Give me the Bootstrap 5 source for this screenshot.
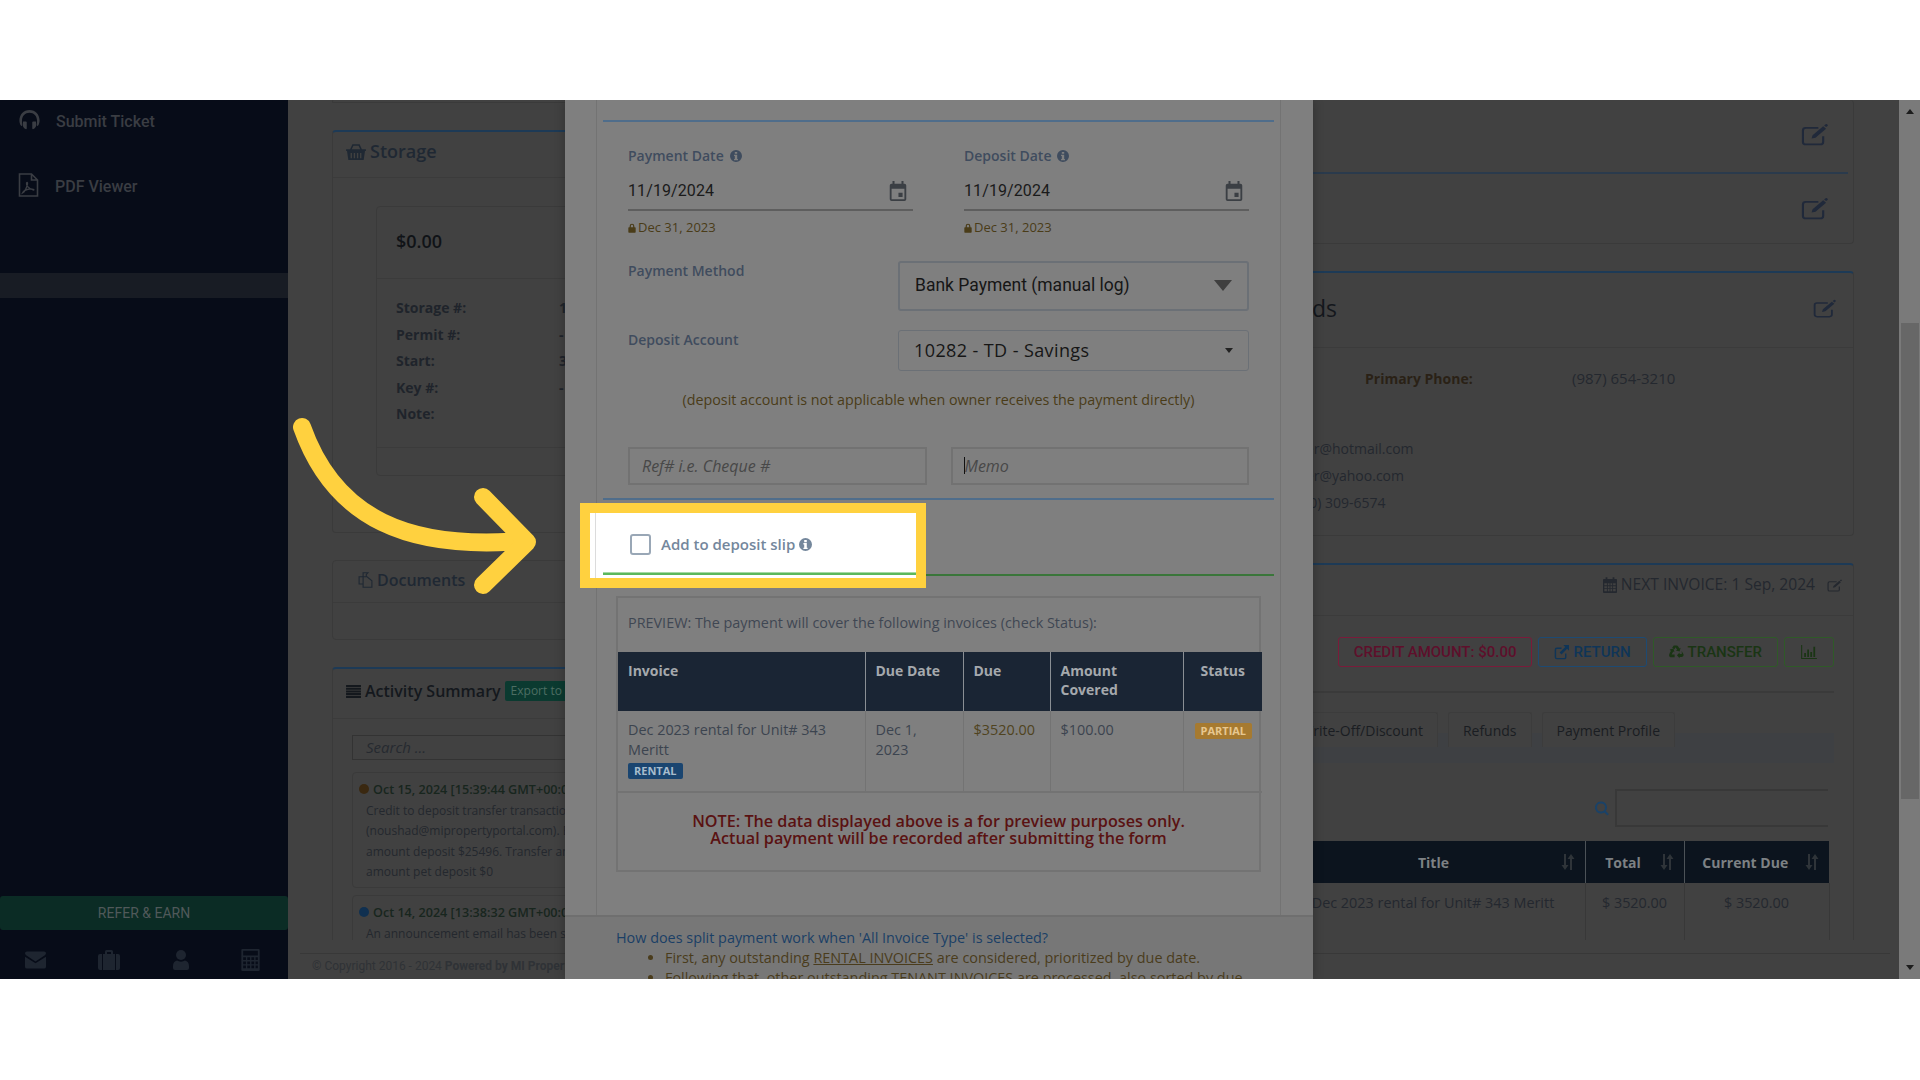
<!DOCTYPE html>
<html lang="en">
<head>
  <meta charset="UTF-8">
  <title>Receive Payment</title>
  <link href="https://cdn.jsdelivr.net/npm/bootstrap@5.3.3/dist/css/bootstrap.min.css" rel="stylesheet">
  <style>
    body { margin: 0; height: 1080px; overflow: hidden; background: #fff; font-family: "Open Sans", sans-serif; font-size: 13px; color: #333; }
    svg.ico { fill: currentColor; display: inline-block; flex: none; }
    .shot { position: relative; width: 1920px; height: 1080px; padding: 100px 0 101px; }
    .app { position: relative; height: 879px; background: #414141; overflow: hidden; }

    .side { width: 288px; flex: none; background: #070c18; color: #3a3d43; font-family: Roboto, sans-serif; }
    .side-link { height: 44px; padding-left: 18px; font-size: 16px; font-weight: 500; }
    .side-link svg { margin: -4px 15px 0 0; }
    .side-link + .side-link { margin-top: 21px; }
    .side-link + .side-link svg { margin-right: 16px; }
    .side-band { height: 25px; margin-top: 64px; background: #181c24; }
    .refer { height: 34px; background: #0b2c25; color: #50595a; border-radius: 3px; font-size: 14px; }
    .side-tools { height: 49px; padding: 11px 28px 0 25px; color: #1e2530; }

    .main-area { flex: 1; min-width: 0; }
    .page-cols { height: 840px; overflow: hidden; padding: 0 45px 0 44px; display: grid; grid-template-columns: 540px 1fr; gap: 24px; }
    .stack { display: flex; flex-direction: column; gap: 27px; }
    .panel { background: #414141; border: 1px solid #3a3a3a; border-radius: 4px; color: #2b2f36; flex: none; }
    .panel-blue { border-top: 2px solid #1d3a56; }
    .panel-head { background: transparent; border-bottom: 1px solid #3b3b3b; padding: 0 13px 3px; font-size: 18px; font-weight: 600; color: #1f2833; }
    .stub { height: 3px; border-top: 0; }
    .storage { height: 403px; }
    .storage .panel-head { height: 46px; padding-bottom: 6px; }
    .store-inner { margin: 28px 0 0 43px; height: 270px; border: 1px solid #3a3a3a; border-radius: 4px; }
    .store-amount { height: 72px; padding: 0 0 2px 19px; border-bottom: 1px solid #3b3b3b; font-size: 18px; font-weight: 600; color: #101317; }
    .store-rows { height: 169px; padding: 16px 0 0 19px; border-bottom: 1px solid #3b3b3b; font-weight: 700; font-size: 14px; color: #1f242b; line-height: 26.500px; }
    .store-rows span { display: inline-block; width: 163px; }
    .docs { height: 80px; }
    .docs .panel-head { height: 42px; padding-left: 25px; font-size: 16px; }
    .activity { height: 400px; }
    .activity .panel-head { height: 50px; padding-bottom: 5px; font-size: 16px; color: #14181d; }
    .btn-export { background: #0b3a30; color: #4d6e63; font-size: 12px; font-weight: 400; border-radius: 2px; padding: 1px 6px; white-space: nowrap; }
    .act-search { margin: 16px 0 12px 19px; height: 25px; border: 1px solid #333; padding-left: 13px; font-style: italic; font-size: 15px; color: #262a30; line-height: 22px; }
    .act-item { margin: 0 0 7px 19px; padding: 7px 6px 0; border: 1px solid #3a3a3a; border-radius: 4px; font-size: 12px; line-height: 20.500px; color: #24282e; height: 116px; white-space: nowrap; overflow: hidden; }
    .act-when { color: #18261e; font-size: 12.600px; font-weight: 600; }
    .dot { display: inline-block; width: 10px; height: 10px; border-radius: 50%; margin-right: 4px; }
    .act-body { padding-left: 7px; }

    .top-card { height: 144px; border-top: 0; }
    .top-row { height: 72px; padding: 0 25px 3px 0; }
    .top-row + .top-row { border-top: 2px solid #2a3a4c; margin-right: 5px; padding: 0 20px 0 0; height: 70px; }
    .ico-edit { color: #20293a; }
    .contact { height: 265px; }
    .contact .panel-head { height: 75px; font-size: 23px; font-weight: 400; color: #14171c; padding-right: 17px; }
    .contact-title { padding-left: 252px; margin-right: auto; }
    .contact-grid { display: grid; grid-template-columns: 468px 207px 1fr; padding-top: 17px; font-size: 14px; line-height: 27px; color: #24282f; }
    .contact-lbl { font-weight: 700; color: #2a2116; }
    .contact-val { font-size: 15px; }
    .contact-list { padding: 43px 0 0 381px; font-size: 14px; line-height: 27px; color: #24282f; }
    .phone-line { padding-left: 11px; }
    .billing { height: 400px; }
    .billing .panel-head { height: 51px; padding: 0 11px 10px 0; font-size: 15.600px; font-weight: 400; color: #24282f; }
    .billing-body { padding: 21px 19px 0 0; }
    .tool-btn { height: 30px; padding: 0 15px; font-family: Roboto, sans-serif; font-size: 15px; font-weight: 500; border: 1px solid; border-radius: 3px; gap: 4px; background: transparent; white-space: nowrap; }
    .tool-red { color: #5e0f2b; border-color: #7a1b3a; }
    .tool-blue { color: #0f3558; border-color: #1d4a73; }
    .tool-green { color: #1a3514; border-color: #2f5a28; }
    .bill-rule { margin-top: 24px; border-top: 2px solid #3a3a3a; }
    .bill-tabs { height: 51px; margin-top: 19px; padding-right: 159px; gap: 10px; background: linear-gradient(transparent 21px, #3e4043 21px); }
    .bill-tab { height: 35px; padding: 0 14px; border: 1px solid #3c3c3c; border-bottom: 0; border-radius: 3px 3px 0 0; background: #414141; color: #1a1d22; font-size: 14px; font-weight: 500; }
    .bill-search { margin-top: 26px; margin-right: 6px; gap: 6px; color: #1a4268; }
    .bill-search div { width: 213px; height: 38px; border: 2px solid #383838; border-right: 0; }
    .bill-table { table-layout: fixed; width: 909px; margin: 14px 0 0 23px; border-collapse: collapse; }
    .bill-table th { height: 42px; background: #0c141e; color: #7d8184; font-size: 14px; font-weight: 700; text-align: center; border-right: 1px solid #4c5257; position: relative; padding-right: 24px; }
    .bill-table th:nth-child(2) { padding-right: 0; }
    .bill-table th:last-child { border-right: 0; }
    .bill-table td { height: 58px; padding-top: 9px; vertical-align: top; text-align: center; font-size: 14.400px; color: #24282f; border-right: 1px solid #383838; }
    .sort-mark { position: absolute; right: 10px; top: 13px; color: #2f3439; }

    .page-foot { margin: 13px 9px 0 12px; border-top: 1px solid #383838; padding: 3px 0 0 12px; font-family: Roboto, sans-serif; font-size: 12px; color: #2f3236; }
    .page-scroll { width: 21px; flex: none; background: #7a7a7a; padding: 0 1px 0 2px; }
    .scroll-thumb { height: 476px; margin-top: 223px; background: #676767; }
    .scroll-up, .scroll-down { position: absolute; right: 6px; width: 0; height: 0; border-left: 4.500px solid transparent; border-right: 4.500px solid transparent; }
    .scroll-up { top: 109px; border-bottom: 5px solid #1d1d1d; }
    .scroll-down { top: 965px; border-top: 5px solid #1d1d1d; }

    .pay-modal { position: absolute; left: 565px; top: 0; width: 748px; height: 879px; background: #7f7f7f; overflow: hidden; padding: 0 32px 0 31px; box-shadow: 0 0 10px rgba(0,0,0,.25); }
    .pay-panel { height: 815px; border-left: 1px solid #737373; border-right: 1px solid #737373; padding: 0 6px; }
    .pay-line { border-bottom: 2px solid #4f6d8b; }
    .pay-green { border-bottom: 2px solid #3a763a; height: 76px; }
    .pay-dates { height: 378px; padding: 0 25px; }
    .pay-lbl { font-size: 14px; font-weight: 600; color: #3f4c5e; line-height: 20px; }
    .date-col { width: 285px; }
    .date-field { height: 45px; border-bottom: 2px solid #5e5e5e; padding: 13px 0 0; font-family: Roboto, sans-serif; font-size: 16px; letter-spacing: .1px; color: #1a1a1a; }
    .locked { padding-top: 7px; font-size: 13px; color: #4a3c18; gap: 2px; }
    .pick { height: 41px; border: 1px solid #6b7076; border-radius: 3px; padding: 0 15px; color: #161616; }
    .pick-lg { width: 351px; height: 50px; border-width: 2px; font-family: Roboto, sans-serif; font-size: 17.500px; }
    .pick-sm { width: 351px; font-size: 18px; letter-spacing: .4px; }
    .caret-lg { width: 0; height: 0; border-left: 9px solid transparent; border-right: 9px solid transparent; border-top: 11px solid #3f3f3f; }
    .caret-sm { width: 0; height: 0; border-left: 4.500px solid transparent; border-right: 4.500px solid transparent; border-top: 5px solid #222; }
    .dep-note { margin: 20px 0 38px; text-align: center; font-size: 14.300px; color: #4a3c18; line-height: 18px; white-space: nowrap; }
    .ref-input { height: 38px; flex: 1; position: relative; }
    .ref-input input { height: 38px; width: 100%; background: transparent; border: 2px solid #727272; border-radius: 0; padding: 0 12px; font-style: italic; font-size: 16px; }
    .ref-input input::placeholder { color: #484848; opacity: 1; }
    .memo-caret { position: absolute; left: 13px; top: 10px; width: 1px; height: 17px; background: #111; }

    .preview { margin: 20px 13px 0; height: 276px; border: 2px solid #737373; }
    .preview-title { height: 54px; padding: 16px 0 0 10px; font-size: 14.400px; color: #3f4753; line-height: 18px; white-space: nowrap; }
    .inv-table { width: 100%; table-layout: fixed; border-collapse: collapse; }
    .inv-table th { height: 59px; background: #1a2534; color: #a5a9ad; padding: 9px 10px; font-size: 14px; font-weight: 700; line-height: 19px; vertical-align: top; border-right: 1px solid #8a8f94; }
    .inv-table td { height: 81px; padding: 9px 10px 0; vertical-align: top; font-size: 14.400px; line-height: 20px; color: #3c444f; border-right: 1px solid #737373; border-bottom: 2px solid #737373; }
    .inv-table th:last-child, .inv-table td:last-child { border-right: 0; }
    .tag-rental, .tag-partial { display: inline-block; font-size: 11px; font-weight: 700; line-height: 16px; padding: 0 6px; border-radius: 2px; }
    .tag-rental { background: #1a4570; color: #a7bccd; }
    .tag-partial { background: #a67a30; color: #e6c78f; margin: 3px 0 0 1px; }
    .inv-table .amt-due { color: #4f4320; padding-right: 0; }
    .inv-note { padding-top: 20px; text-align: center; font-size: 16.200px; font-weight: 600; line-height: 17px; color: #5a1212; white-space: nowrap; }

    .pay-foot { height: 64px; background: #777; border-top: 2px solid #6f6f6f; margin: 0 -32px 0 -31px; padding: 11px 0 0 51px; font-size: 14.400px; line-height: 20px; white-space: nowrap; overflow: hidden; }
    .pay-foot-q { color: #1b3f66; }
    .pay-foot ul { margin: 0; padding-left: 49px; color: #4a3c1c; }
    .pay-foot u { text-underline-offset: 1px; }

    .spot { position: absolute; left: 580px; top: 503px; width: 346px; height: 85px; border: 10px solid #ffd13f; background: #fff; padding: 0 0 2px 40px; }
    .spot-edge { position: absolute; left: 5px; top: 0; bottom: 0; width: 1px; background: #dcdcdc; }
    .spot-green { position: absolute; left: 13px; right: 0; top: 59px; height: 3px; background: #5cb85c; border-top: 1px solid #a5d9a5; }
    .spot-check { width: 21px; height: 21px; border: 2px solid #99a7b6; border-radius: 3px; margin-right: 10px; }
    .spot-text { font-size: 15px; font-weight: 600; color: #74879c; }
    .arrow-layer { position: absolute; left: 0; top: 0; pointer-events: none; }
  </style>
</head>
<body>
  <svg width="0" height="0" class="position-absolute">
    <symbol id="i-info" viewBox="0 0 16 16"><path fill-rule="evenodd" d="M8 0a8 8 0 1 0 0 16A8 8 0 0 0 8 0zM6.400 2.500h3.200v2.600H6.400zM5.400 6.300h4.200v5.600h1v1.700H5.400v-1.700h1V8H5.400z"/></symbol>
    <symbol id="i-lock" viewBox="0 0 12 14"><path fill-rule="evenodd" d="M2.500 6V4a3.500 3.500 0 0 1 7 0v2h1a1 1 0 0 1 1 1v6a1 1 0 0 1-1 1h-9a1 1 0 0 1-1-1V7a1 1 0 0 1 1-1zm1.800 0h3.400V4a1.700 1.700 0 0 0-3.400 0z"/></symbol>
    <symbol id="i-cal" viewBox="0 0 24 24"><path fill-rule="evenodd" d="M5 4h1V1h2.200v3h7.600V1H18v3h1a2 2 0 0 1 2 2v15a2 2 0 0 1-2 2H5a2 2 0 0 1-2-2V6a2 2 0 0 1 2-2zm0 5.500V21h14V9.500zM12.500 14H17v4.500h-4.500z"/></symbol>
    <symbol id="i-edit" viewBox="0 0 28 28" preserveAspectRatio="none"><path fill="none" stroke="currentColor" stroke-width="2.200" d="M23 16v7a3 3 0 0 1-3 3H5a3 3 0 0 1-3-3V9a3 3 0 0 1 3-3h13"/><path d="M12 15 23 4l3 3-11 11-4 1zM24 3l1.500-1.500a1 1 0 0 1 1.400 0l.6.600a1 1 0 0 1 0 1.400L26 5z"/></symbol>
    <symbol id="i-head" viewBox="0 0 24 24"><path d="M12 1C5.500 1 1 6 1 12.500c0 2 .5 3.800 1.300 5.300l1.500 1V12.500C3.800 7.500 7.300 4 12 4s8.200 3.500 8.200 8.500v6.300l1.500-1c.8-1.500 1.300-3.300 1.300-5.300C23 6 18.500 1 12 1z"/><path d="M5 13.500h3a1 1 0 0 1 1 1V21a1 1 0 0 1-1.300.9C5.500 21 4.500 19 4.500 17zM19 13.500h-3a1 1 0 0 0-1 1V21a1 1 0 0 0 1.300.9c2.200-.9 3.200-2.900 3.200-4.900z"/></symbol>
    <symbol id="i-pdf" viewBox="0 0 20 24"><path fill="none" stroke="currentColor" stroke-width="1.600" d="M1 1h12l6 6v16H1zM13 1v6h6"/><path fill="none" stroke="currentColor" stroke-width="1.300" d="M4 20c2-1 4-5 5-9 .3-1.500-.5-2-1-1-.5 2 2 6 7 7 1.500 0-1-1.500-4-1-3 .5-6 2-7 4z"/></symbol>
    <symbol id="i-basket" viewBox="0 0 22 20"><path fill-rule="evenodd" d="M0 7h4.500L7 1.500h8L17.500 7H22v2h-1l-1.500 10h-17L1 9H0zM6.300 7h9.400l-1.800-4H8.100zM5 11v6h1.500v-6zm3.500 0v6H10v-6zm3.500 0v6h1.500v-6zm3.500 0v6H17v-6z"/></symbol>
    <symbol id="i-docs" viewBox="0 0 18 20"><path fill="none" stroke="currentColor" stroke-width="1.400" d="M6 6V1h6l-2 2v3M6 6H1v9l5 0M6 6h5l6 5v8H6z"/></symbol>
    <symbol id="i-list" viewBox="0 0 16 14"><path d="M0 0h16v2.200H0zM0 2.900h16v2.200H0zM0 5.800h16V8H0zM0 8.700h16v2.200H0zM0 11.600h16V14H0z"/></symbol>
    <symbol id="i-mail" viewBox="0 0 22 18"><path d="M2 0h18a2 2 0 0 1 2 2c0 .8-.5 1.500-1.200 2L11 10.500 1.200 4C.5 3.500 0 2.800 0 2a2 2 0 0 1 2-2zM0 5.500l11 7 11-7V16a2 2 0 0 1-2 2H2a2 2 0 0 1-2-2z"/></symbol>
    <symbol id="i-case" viewBox="0 0 22 20"><path fill-rule="evenodd" d="M7 4V1.500A1.500 1.500 0 0 1 8.500 0h5A1.500 1.500 0 0 1 15 1.500V4h5a2 2 0 0 1 2 2v12a2 2 0 0 1-2 2H2a2 2 0 0 1-2-2V6a2 2 0 0 1 2-2zm2 0h4V2H9zM4 4v16h1V4zm13 0v16h1V4z"/></symbol>
    <symbol id="i-user" viewBox="0 0 16 20"><circle cx="8" cy="5" r="5"/><path d="M4 10.500c2.300 1.500 5.700 1.500 8 0 2.500.6 4 2.500 4 5.500v2a2 2 0 0 1-2 2H2a2 2 0 0 1-2-2v-2c0-3 1.500-4.900 4-5.500z"/></symbol>
    <symbol id="i-calc" viewBox="0 0 20 24"><path fill-rule="evenodd" d="M1 0h18a1 1 0 0 1 1 1v22a1 1 0 0 1-1 1H1a1 1 0 0 1-1-1V1a1 1 0 0 1 1-1zm1 2v5h16V2zm0 7v3h3V9zm4.500 0v3h3V9zm4.500 0v3h3V9zm4.500 0v3H18V9zM2 13.500v3h3v-3zm4.500 0v3h3v-3zm4.500 0v3h3v-3zm4.500 0v3H18v-3zM2 18v3h3v-3zm4.500 0v3h3v-3zm4.500 0v3h3v-3zm4.500 0v3H18v-3z"/></symbol>
    <symbol id="i-month" viewBox="0 0 16 18"><path fill-rule="evenodd" d="M1 2h2V0h2v2h6V0h2v2h2a1 1 0 0 1 1 1v14a1 1 0 0 1-1 1H1a1 1 0 0 1-1-1V3a1 1 0 0 1 1-1zm.5 5v2.300h3V7zm4 0v2.300h2V7zm3 0v2.300h2V7zm3 0v2.300h3V7zm-10 3.300v2.400h3v-2.400zm4 0v2.400h2v-2.400zm3 0v2.400h2v-2.400zm3 0v2.400h3v-2.400zm-10 3.400v2.500h3v-2.500zm4 0v2.500h2v-2.500zm3 0v2.500h2v-2.500zm3 0v2.500h3v-2.500z"/></symbol>
    <symbol id="i-ext" viewBox="0 0 16 16"><path fill="none" stroke="currentColor" stroke-width="1.500" d="M12.500 9v4a1.500 1.500 0 0 1-1.500 1.500H3A1.500 1.500 0 0 1 1.500 13V5A1.500 1.500 0 0 1 3 3.500h5"/><path d="M10 0h6v6l-2-2-6 6-2-2 6-6z"/></symbol>
    <symbol id="i-recycle" viewBox="0 0 16 16"><path d="M8 .5c.8 0 1.400.4 1.800 1l1.300 2.200 1.300-.8-1.100 4-4-1 1.300-.8L7 2.300 5.800 4.400 3.400 3l1.700-2.500C5.500.5 6.500.5 8 .5zM13.500 6.500l1.800 3.200c.7 1.300-.1 3-1.800 3h-2.200v1.500L8.500 11l2.800-3v1.500h2.400zM2 6.300l-1.300 2.600c-.5 1-1 2.500 0 3.500.4.400 1 .6 1.700.6H6v-3H2.800l1.700-3 1.300.8-1-4-4 1z"/></symbol>
    <symbol id="i-chart" viewBox="0 0 18 16"><path d="M0 0h1.200v14.800H18V16H0zM3.500 9h2v4.800h-2zM7 5h2v8.800H7zm3.500 3h2v5.800h-2zM14 2h2v11.800h-2z"/></symbol>
    <symbol id="i-search" viewBox="0 0 14 14"><path fill-rule="evenodd" d="M6 0a6 6 0 0 1 4.800 9.500l3 3-1.400 1.400-3-3A6 6 0 1 1 6 0zm0 2a4 4 0 1 0 0 8 4 4 0 0 0 0-8z"/></symbol>
    <symbol id="i-sort" viewBox="0 0 14 16"><path d="M3 0h2v11h2.500L4 16 .5 11H3zM9 16h2V5h2.500L10 0 6.500 5H9z"/></symbol>
  </svg>

  <div class="shot">
    <div class="app d-flex">
      <aside class="side d-flex flex-column">
        <div class="side-link d-flex align-items-center"><svg class="ico" width="23" height="22"><use href="#i-head"/></svg>Submit Ticket</div>
        <div class="side-link d-flex align-items-center"><svg class="ico" width="21" height="24"><use href="#i-pdf"/></svg>PDF Viewer</div>
        <div class="side-band"></div>
        <div class="refer mt-auto d-flex align-items-center justify-content-center">REFER &amp; EARN</div>
        <div class="side-tools d-flex justify-content-between align-items-center">
          <svg class="ico" width="21" height="18"><use href="#i-mail"/></svg>
          <svg class="ico" width="22" height="20"><use href="#i-case"/></svg>
          <svg class="ico" width="16" height="20"><use href="#i-user"/></svg>
          <svg class="ico" width="19" height="22"><use href="#i-calc"/></svg>
        </div>
      </aside>

      <div class="main-area">
        <div class="page-cols">
          <div class="stack">
            <div class="panel stub"></div>
            <div class="panel panel-blue storage">
              <div class="panel-head d-flex align-items-center gap-1"><svg class="ico" width="20" height="18"><use href="#i-basket"/></svg>Storage</div>
              <div class="store-inner">
                <div class="store-amount d-flex align-items-center">$0.00</div>
                <div class="store-rows">
                  <div><span>Storage #:</span>1</div>
                  <div><span>Permit #:</span>-</div>
                  <div><span>Start:</span>3</div>
                  <div><span>Key #:</span>-</div>
                  <div><span>Note:</span></div>
                </div>
              </div>
            </div>
            <div class="panel docs">
              <div class="panel-head d-flex align-items-center gap-1"><svg class="ico" width="15" height="16"><use href="#i-docs"/></svg>Documents</div>
            </div>
            <div class="panel panel-blue activity">
              <div class="panel-head d-flex align-items-center gap-1"><svg class="ico" width="15" height="13"><use href="#i-list"/></svg>Activity Summary<span class="btn-export">Export to Excel</span></div>
              <div class="act-search">Search ...</div>
              <div class="act-item">
                <div class="act-when"><span class="dot" style="background:#3a2810"></span>Oct 15, 2024 [15:39:44 GMT+00:00]</div>
                <div class="act-body">Credit to deposit transfer transaction<br>(noushad@mipropertyportal.com). Balance<br>amount deposit $25496. Transfer amount<br>amount pet deposit $0</div>
              </div>
              <div class="act-item">
                <div class="act-when"><span class="dot" style="background:#103050"></span>Oct 14, 2024 [13:38:32 GMT+00:00]</div>
                <div class="act-body">An announcement email has been sent</div>
              </div>
            </div>
          </div>

          <div class="stack">
            <div class="panel top-card">
              <div class="top-row d-flex align-items-center justify-content-end ico-edit"><svg class="ico" width="27" height="23"><use href="#i-edit"/></svg></div>
              <div class="top-row d-flex align-items-center justify-content-end ico-edit"><svg class="ico" width="27" height="23"><use href="#i-edit"/></svg></div>
            </div>
            <div class="panel panel-blue contact">
              <div class="panel-head d-flex align-items-center justify-content-end"><span class="contact-title">Contact Records</span><svg class="ico ico-edit" width="23" height="19"><use href="#i-edit"/></svg></div>
              <div class="contact-grid"><span></span><span class="contact-lbl">Primary Phone:</span><span class="contact-val">(987) 654-3210</span></div>
              <div class="contact-list">owner@hotmail.com<br>owner@yahoo.com<br><span class="phone-line">(250) 309-6574</span></div>
            </div>
            <div class="panel panel-blue billing">
              <div class="panel-head d-flex align-items-center justify-content-end gap-1"><svg class="ico" width="14" height="16"><use href="#i-month"/></svg>NEXT INVOICE: 1 Sep, 2024<svg class="ico ms-2" width="15" height="13"><use href="#i-edit"/></svg></div>
              <div class="billing-body">
                <div class="d-flex justify-content-end" style="gap:6px">
                  <div class="tool-btn tool-red d-flex align-items-center">CREDIT AMOUNT: $0.00</div>
                  <div class="tool-btn tool-blue d-flex align-items-center"><svg class="ico" width="15" height="15"><use href="#i-ext"/></svg>RETURN</div>
                  <div class="tool-btn tool-green d-flex align-items-center"><svg class="ico" width="15" height="15"><use href="#i-recycle"/></svg>TRANSFER</div>
                  <div class="tool-btn tool-green d-flex align-items-center"><svg class="ico" width="18" height="14"><use href="#i-chart"/></svg></div>
                </div>
                <div class="bill-rule"></div>
                <div class="bill-tabs d-flex justify-content-end">
                  <div class="bill-tab d-flex align-items-center">Write-Off/Discount</div>
                  <div class="bill-tab d-flex align-items-center">Refunds</div>
                  <div class="bill-tab d-flex align-items-center">Payment Profile</div>
                </div>
                <div class="bill-search d-flex justify-content-end align-items-center"><svg class="ico" width="14" height="15"><use href="#i-search"/></svg><div></div></div>
                <table class="bill-table">
                  <colgroup><col style="width:361px"><col style="width:304px"><col style="width:99px"><col style="width:145px"></colgroup>
                  <tr>
                    <th></th>
                    <th>Title<svg class="ico sort-mark" width="14" height="16"><use href="#i-sort"/></svg></th>
                    <th>Total<svg class="ico sort-mark" width="14" height="16"><use href="#i-sort"/></svg></th>
                    <th>Current Due<svg class="ico sort-mark" width="14" height="16"><use href="#i-sort"/></svg></th>
                  </tr>
                  <tr><td></td><td>Dec 2023 rental for Unit# 343 Meritt</td><td>$ 3520.00</td><td>$ 3520.00</td></tr>
                </table>
              </div>
            </div>
          </div>
        </div>
        <div class="page-foot">© Copyright 2016 - 2024 <b>Powered by MI Property Portal</b></div>
      </div>

      <div class="page-scroll"><div class="scroll-thumb"></div></div>

      <div class="pay-modal">
        <div class="pay-panel">
          <div class="pay-line" style="height:22px"></div>
          <div class="pay-dates pay-line">
            <div class="d-flex justify-content-between" style="padding-top:24px">
              <div class="date-col">
                <div class="pay-lbl d-flex align-items-center" style="gap:6px">Payment Date <svg class="ico" width="12" height="12"><use href="#i-info"/></svg></div>
                <div class="date-field d-flex justify-content-between align-items-start">11/19/2024<svg class="ico me-1" width="22" height="24" style="color:#3b3f44"><use href="#i-cal"/></svg></div>
                <div class="locked d-flex align-items-center"><svg class="ico" width="8" height="10"><use href="#i-lock"/></svg>Dec 31, 2023</div>
              </div>
              <div class="date-col">
                <div class="pay-lbl d-flex align-items-center" style="gap:6px">Deposit Date <svg class="ico" width="12" height="12"><use href="#i-info"/></svg></div>
                <div class="date-field d-flex justify-content-between align-items-start">11/19/2024<svg class="ico me-1" width="22" height="24" style="color:#3b3f44"><use href="#i-cal"/></svg></div>
                <div class="locked d-flex align-items-center"><svg class="ico" width="8" height="10"><use href="#i-lock"/></svg>Dec 31, 2023</div>
              </div>
            </div>
            <div class="d-flex justify-content-between align-items-start" style="margin-top:23px">
              <div class="pay-lbl">Payment Method</div>
              <div class="pick pick-lg d-flex align-items-center justify-content-between">Bank Payment (manual log)<span class="caret-lg"></span></div>
            </div>
            <div class="d-flex justify-content-between align-items-start" style="margin-top:19px">
              <div class="pay-lbl">Deposit Account</div>
              <div class="pick pick-sm d-flex align-items-center justify-content-between">10282 - TD - Savings<span class="caret-sm"></span></div>
            </div>
            <div class="dep-note">(deposit account is not applicable when owner receives the payment directly)</div>
            <div class="d-flex gap-4">
              <div class="ref-input"><input type="text" placeholder="Ref# i.e. Cheque #"></div>
              <div class="ref-input"><input type="text" placeholder="Memo"><span class="memo-caret"></span></div>
            </div>
          </div>
          <div class="pay-green"></div>
          <div class="preview">
            <div class="preview-title">PREVIEW: The payment will cover the following invoices (check Status):</div>
            <table class="inv-table">
              <colgroup><col style="width:247px"><col style="width:98px"><col style="width:87px"><col style="width:133px"><col style="width:79px"></colgroup>
              <tr><th>Invoice</th><th>Due Date</th><th>Due</th><th>Amount Covered</th><th class="text-center">Status</th></tr>
              <tr>
                <td>Dec 2023 rental for Unit# 343 Meritt<br><span class="tag-rental">RENTAL</span></td>
                <td>Dec 1,<br>2023</td>
                <td class="amt-due">$3520.00</td>
                <td>$100.00</td>
                <td class="text-center"><span class="tag-partial">PARTIAL</span></td>
              </tr>
            </table>
            <div class="inv-note">NOTE: The data displayed above is a for preview purposes only.<br>Actual payment will be recorded after submitting the form</div>
          </div>
        </div>
        <div class="pay-foot">
          <div class="pay-foot-q">How does split payment work when 'All Invoice Type' is selected?</div>
          <ul>
            <li>First, any outstanding <u>RENTAL INVOICES</u> are considered, prioritized by due date.</li>
            <li>Following that, other outstanding <u>TENANT INVOICES</u> are processed, also sorted by due</li>
          </ul>
        </div>
      </div>
    </div>
    <div class="scroll-up"></div>
    <div class="scroll-down"></div>

    <div class="spot d-flex align-items-center">
      <span class="spot-edge"></span>
      <span class="spot-check"></span>
      <span class="spot-text d-flex align-items-center gap-1">Add to deposit slip <svg class="ico" width="13" height="13"><use href="#i-info"/></svg></span>
      <span class="spot-green"></span>
    </div>

    <svg class="arrow-layer" width="1920" height="1080" viewBox="0 0 1920 1080" fill="none" stroke="#ffd13f" stroke-width="18" stroke-linecap="round" stroke-linejoin="round">
      <path d="M302 427C335 520 410 550 522 541"/>
      <path d="M483 497 527 542 483 585"/>
    </svg>
  </div>
</body>
</html>
